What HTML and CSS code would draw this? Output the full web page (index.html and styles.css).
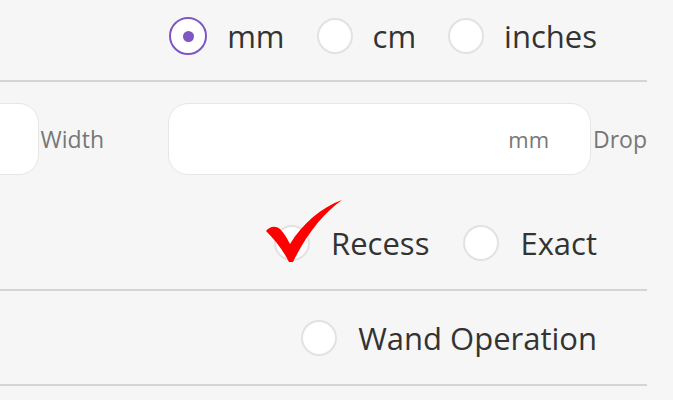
FILE: index.html
```html
<!DOCTYPE html>
<html lang="en">
<head>
  <meta charset="UTF-8">
  <title>Blind Size</title>
  <link rel="stylesheet" href="styles.css">
</head>
<body>
  <div class="form">
    <!-- Units -->
    <div class="section units">
      <label class="option"><span class="radio checked"></span>mm</label>
      <label class="option"><span class="radio"></span>cm</label>
      <label class="option"><span class="radio"></span>inches</label>
    </div>

    <!-- Size -->
    <div class="section size">
      <div class="fields">
        <div class="field">
          <div class="input"></div>
          <span class="field-label">Width</span>
        </div>
        <div class="field">
          <div class="input"><span class="unit">mm</span></div>
          <span class="field-label">Drop</span>
        </div>
      </div>
      <div class="row fit">
        <label class="option recess">
          <span class="radio"></span>Recess
          <svg class="tick" width="76" height="63" viewBox="0 0 76 63">
            <path d="M0,31 C3,27 9,25 14,29 C18,33 21,38 24,44 C37,23 56,7 76,0 C58,13 41,33 27,62 L23,62 C17,50 9,40 0,31 Z" fill="#ff0000"/>
          </svg>
        </label>
        <label class="option"><span class="radio"></span>Exact</label>
      </div>
    </div>

    <!-- Operation -->
    <div class="section operation">
      <label class="option"><span class="radio"></span>Wand Operation</label>
    </div>
  </div>
</body>
</html>
```

FILE: styles.css
```css
/* General */
body {
  margin: 0;
  background-color: #f6f6f6;
  font-family: 'Open Sans', sans-serif;
  color: #333;
  overflow: hidden;
}
.form {
  width: 647px;
}
.section {
  border-bottom: 2px solid #d4d4d4;
  padding-right: 50px;
}
.units {
  display: flex;
  justify-content: flex-end;
  padding-top: 17px;
  padding-bottom: 25px;
  gap: 32px;
}
.units .option {
  gap: 20px;
}
.option {
  display: flex;
  align-items: center;
  gap: 21px;
  font-size: 31px;
  line-height: 38px;
  height: 38px;
  position: relative;
}
.radio {
  width: 32px;
  height: 32px;
  border: 2px solid #e2e2e2;
  border-radius: 50%;
  background-color: white;
  display: flex;
  justify-content: center;
  align-items: center;
}
.radio.checked {
  width: 34px;
  height: 34px;
  border-color: #7e57c2;
}
.radio.checked::after {
  content: '';
  width: 11px;
  height: 11px;
  border-radius: 50%;
  background-color: #7e57c2;
}
/* Size inputs */
.size {
  padding-top: 21px;
  padding-bottom: 27px;
}
.fields {
  display: flex;
  justify-content: flex-end;
  gap: 64px;
  margin-right: -50px;
}
.field {
  display: flex;
  align-items: center;
  flex-shrink: 0;
}
.input {
  width: 423px;
  height: 72px;
  border: 1px solid #e6e6e6;
  border-radius: 20px;
  background-color: white;
  display: flex;
  justify-content: flex-end;
  align-items: center;
  padding-right: 41px;
  box-sizing: border-box;
}
.unit {
  font-size: 22px;
  color: #777;
}
.field-label {
  font-size: 23px;
  color: #777;
  margin-left: 2px;
}
.row {
  display: flex;
  justify-content: flex-end;
  gap: 34px;
}
.fit {
  margin-top: 49px;
}
.tick {
  position: absolute;
  left: -8px;
  top: -24px;
}
.operation {
  display: flex;
  justify-content: flex-end;
  padding-top: 28px;
  padding-bottom: 27px;
}
```
